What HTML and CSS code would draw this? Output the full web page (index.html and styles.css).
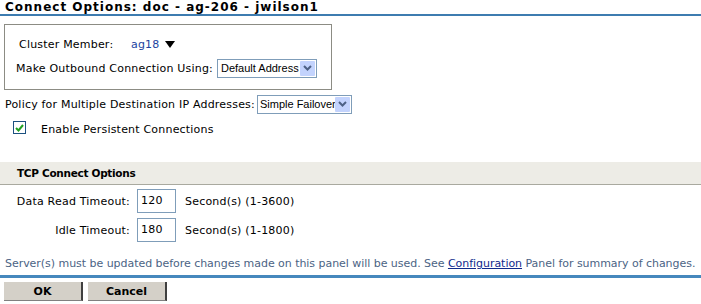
FILE: index.html
```html
<!DOCTYPE html>
<html lang="en">

<head>
    <meta charset="UTF-8">
    <title>Connect Options</title>
    <link rel="stylesheet" href="styles.css">
</head>

<body>
    <h1 class="page-title">Connect Options: doc - ag-206 - jwilson1</h1>

    <div class="member-box">
        <div class="row">
            <span class="label cluster-label">Cluster Member:</span>
            <a class="member-link">ag18</a>
            <svg class="caret" width="10" height="7" viewBox="0 0 10 7"><path d="M0 0h10L5 7z" fill="#000"/></svg>
        </div>
        <div class="row">
            <span class="label">Make Outbound Connection Using:</span>
            <div class="select sel-address">
                <span class="select-text">Default Address</span>
                <span class="select-btn"><svg width="9" height="6" viewBox="0 0 9 6"><path d="M1 1l3.5 3.5L8 1" fill="none" stroke="#4d6185" stroke-width="2"/></svg></span>
            </div>
        </div>
    </div>

    <div class="row policy-row">
        <span class="label">Policy for Multiple Destination IP Addresses:</span>
        <div class="select sel-policy">
            <span class="select-text">Simple Failover</span>
            <span class="select-btn"><svg width="9" height="6" viewBox="0 0 9 6"><path d="M1 1l3.5 3.5L8 1" fill="none" stroke="#4d6185" stroke-width="2"/></svg></span>
        </div>
    </div>

    <div class="row check-row">
        <span class="checkbox"><svg width="9" height="8" viewBox="0 0 9 8"><path d="M1 4l2.5 2.5L8 1" fill="none" stroke="#21a121" stroke-width="2"/></svg></span>
        <span class="label">Enable Persistent Connections</span>
    </div>

    <div class="section-head">TCP Connect Options</div>

    <div class="timeouts">
        <span class="t-label">Data Read Timeout:</span>
        <span class="t-input">120</span>
        <span class="t-unit">Second(s) (1-3600)</span>
        <span class="t-label">Idle Timeout:</span>
        <span class="t-input">180</span>
        <span class="t-unit">Second(s) (1-1800)</span>
    </div>

    <p class="notice">Server(s) must be updated before changes made on this panel will be used. See <a class="notice-link">Configuration</a> Panel for summary of changes.</p>

    <div class="buttons">
        <button class="btn">OK</button>
        <button class="btn">Cancel</button>
    </div>
</body>

</html>
```

FILE: styles.css
```css
* {
    box-sizing: border-box;
}

body {
    margin: 0;
    font-family: "DejaVu Sans", Verdana, sans-serif;
    font-size: 11px;
    letter-spacing: 0.2px;
    color: #000;
    background-color: #fff;
}

.page-title {
    margin: 0;
    padding: 1px 5px 0;
    height: 16px;
    font-size: 12px;
    font-weight: bold;
    letter-spacing: 1px;
    line-height: 13px;
    border-bottom: 2px solid #3d7cb0;
}

.member-box {
    margin: 8px 0 0 4px;
    width: 328px;
    height: 66px;
    padding: 8px 0 0 11px;
    border: 1px solid #8c8c84;
}

.row {
    display: flex;
    align-items: center;
    height: 22px;
}

.member-box .row + .row {
    margin-top: 2px;
}

.label {
    white-space: nowrap;
}

.cluster-label {
    width: 115px;
    padding-left: 3px;
}

.member-link {
    color: #1c44a0;
}

.caret {
    margin-left: 5px;
}

.select {
    display: flex;
    align-items: center;
    height: 19px;
    border: 1px solid #7f9db9;
    background-color: #fff;
}

.sel-address {
    width: 100px;
    margin-left: 4px;
}

.sel-policy {
    width: 95px;
    margin-left: 2px;
}

.select-text {
    flex: 1;
    min-width: 0;
    overflow: hidden;
    padding: 0 0 0 3px;
    font-family: "Liberation Sans", Arial, sans-serif;
    font-size: 11px;
    white-space: nowrap;
    letter-spacing: 0;
}

.sel-policy .select-text {
    padding-left: 2px;
}

.select-btn {
    display: flex;
    flex: none;
    align-items: center;
    justify-content: center;
    width: 15px;
    height: 15px;
    margin-right: 1px;
    background-color: #c3d3fd;
    border-radius: 1px;
}

.policy-row {
    margin: 3px 0 0 5px;
}

.check-row {
    margin: 3px 0 0 13px;
}

.checkbox {
    display: flex;
    align-items: center;
    justify-content: center;
    width: 13px;
    height: 13px;
    border: 1px solid #1c5180;
    margin: -3px 15px 0 0;
}

.section-head {
    margin-top: 22px;
    height: 23px;
    line-height: 22px;
    padding-left: 17px;
    font-size: 10.5px;
    font-weight: bold;
    letter-spacing: -0.3px;
    background-color: #edece6;
    border-bottom: 1px solid #a9a99f;
}

.timeouts {
    display: grid;
    grid-template-columns: 137px 39px auto;
    grid-auto-rows: 24px;
    row-gap: 5px;
    align-items: center;
    margin-top: 4px;
}

.t-label {
    text-align: right;
    padding-right: 7px;
}

.t-input {
    display: block;
    height: 24px;
    line-height: 22px;
    border: 1px solid #7f9db9;
    padding-left: 3px;
}

.t-unit {
    padding-left: 9px;
}

.notice {
    margin: 15px 0 0;
    padding: 0 0 5px 5px;
    line-height: 13px;
    color: #4b6384;
    letter-spacing: -0.04px;
    white-space: nowrap;
    border-bottom: 3px solid #4688bd;
}

.notice-link {
    color: #102a8c;
    text-decoration: underline;
}

.buttons {
    display: flex;
    gap: 5px;
    margin: 4px 0 0 4px;
}

.btn {
    width: 79px;
    height: 19px;
    padding: 0;
    font-family: "DejaVu Sans", Verdana, sans-serif;
    font-size: 11px;
    font-weight: bold;
    color: #000;
    background-color: #d4d0c8;
    border: none;
    border-right: 2px solid #404040;
    border-bottom: 1px solid #808080;
}
```
